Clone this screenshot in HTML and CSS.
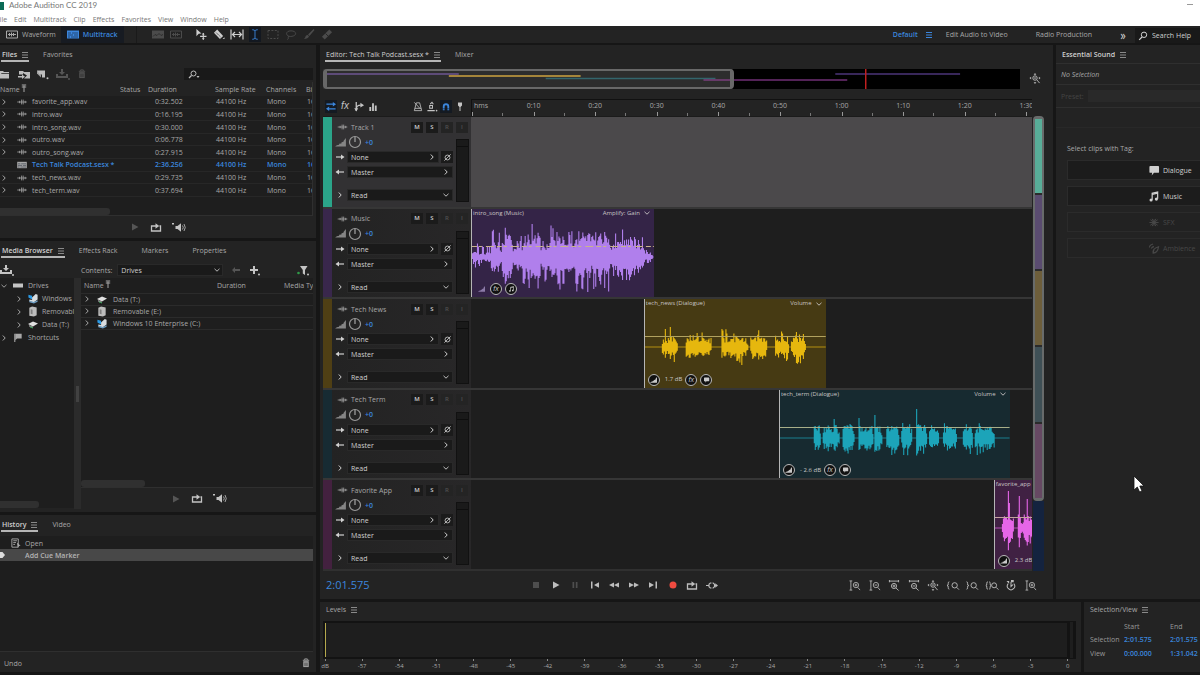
FILE: index.html
```html
<!DOCTYPE html>
<html lang="en">
<head>
<meta charset="utf-8">
<title>Adobe Audition CC 2019</title>
<link rel="stylesheet" href="styles.css">
</head>
<body>
<svg class="sprite" aria-hidden="true">
  <symbol id="wave" viewBox="0 0 12 10"><path d="M0 5h12" stroke="currentColor" stroke-width=".9"/><path d="M3 3.500v3M5.500 2v6M7.500 2v6M10 3.500v3" stroke="currentColor" fill="none"/></symbol>
  <symbol id="waveform" viewBox="0 0 12 10"><path d="M.5 1.500h11v7H.5zM2 5h8M3.500 3.500v3M5.500 3v4M7.500 3.500v3" stroke="currentColor" fill="none"/></symbol>
  <symbol id="multi" viewBox="0 0 12 10"><path d="M0 1h12v8H0z" fill="currentColor"/><path d="M1 3.500h3M5 3.500h6M1 5.500h5M7 5.500h4M1 7.500h2M4 7.500h7" stroke="#111c2c" stroke-width=".6"/></symbol>
  <symbol id="menu" viewBox="0 0 6 8"><path d="M0 1.500h6M0 4h6M0 6.500h6" stroke="currentColor" stroke-width="1"/></symbol>
  <symbol id="hist" viewBox="0 0 12 10"><path d="M0 1h12v8H0z" fill="currentColor"/><path d="M1 7l2-2 2 1 2-2 2 2 2-1" stroke="#232323" stroke-width=".7" fill="none"/></symbol>
  <symbol id="move" viewBox="0 0 12 12"><path d="M1 0l5.500 5-3 .2L1 8z" fill="currentColor"/><path d="M8.500 4.500v7M5 8h7" stroke="currentColor" stroke-width="1.200"/><path d="M7 6l1.500-2L10 6zM7 10l1.500 2 1.500-2z" fill="currentColor"/></symbol>
  <symbol id="razor" viewBox="0 0 12 12"><path d="M4 .5l6.500 7-3.500 3.500L.5 4z" fill="currentColor"/><path d="M3 4l4.500 4.500" stroke="#222" stroke-width="1" stroke-dasharray="1.500 1"/><path d="M10 11h2v-2z" fill="currentColor"/></symbol>
  <symbol id="slip" viewBox="0 0 14 10"><path d="M1 0v10M13 0v10M3 5h8M5 2.500L2.500 5 5 7.500M9 2.500L11.500 5 9 7.500" stroke="currentColor" stroke-width="1.200" fill="none"/></symbol>
  <symbol id="ibeam" viewBox="0 0 8 12"><path d="M1 .8q2.500 0 3 1.200Q4.500.8 7 .8M4 2v8M1 11.200q2.500 0 3-1.200.5 1.200 3 1.200" stroke="currentColor" fill="none"/></symbol>
  <symbol id="marquee" viewBox="0 0 12 10"><path d="M1 1h10v8H1z" stroke="currentColor" stroke-dasharray="2 1.400" fill="none"/></symbol>
  <symbol id="lasso" viewBox="0 0 12 12"><path d="M4 8C0 7 0 2 6 2s7 5 1 6q-2 .3-3 0q-1.500 0-1 1.500t-1 2" stroke="currentColor" fill="none"/></symbol>
  <symbol id="brush" viewBox="0 0 12 12"><path d="M11 0L5 6l1.500 1.500L12 1zM4.500 6.500L6 8q-1 3-5.500 3Q2 9.500 2.200 8.200T4.500 6.500z" fill="currentColor"/></symbol>
  <symbol id="heal" viewBox="0 0 12 12"><path d="M8.500.5l3 3-8 8-3-3z" fill="currentColor"/><path d="M4.500 5l3 3M1 2l3-1.500" stroke="#222"/></symbol>
  <symbol id="mag" viewBox="0 0 10 10"><circle cx="6" cy="3.800" r="2.700" stroke="currentColor" fill="none"/><path d="M4 6L1.200 8.800" stroke="currentColor" stroke-width="1.200"/></symbol>
  <symbol id="magdrop" viewBox="0 0 12 10"><circle cx="5.500" cy="4" r="2.500" stroke="currentColor" fill="none"/><path d="M3.500 6L1 8.500" stroke="currentColor" stroke-width="1.200"/><path d="M8.500 6.500h3L10 8.500z" fill="currentColor"/></symbol>
  <symbol id="folder" viewBox="0 0 12 10"><path d="M0 1.500h4l1 1h5v1.200H2.500L0 8z" fill="currentColor"/><path d="M0 4.500h10V9H0z" fill="currentColor"/></symbol>
  <symbol id="import" viewBox="0 0 12 10"><path d="M1 1.500h4l1 1h6V9H6L9 6 5 3.500v1.500H1z" fill="currentColor"/><path d="M0 6.500h4V5l3 2.300L4 9.500V8H0z" fill="currentColor"/></symbol>
  <symbol id="newf" viewBox="0 0 12 10"><path d="M0 1h8v7H5V5H2.500z" fill="currentColor"/><path d="M0 1v3l4 4V5z" fill="currentColor" opacity=".8"/><circle cx="10.500" cy="8.800" r="1" fill="currentColor"/></symbol>
  <symbol id="download" viewBox="0 0 14 11"><path d="M5 0h2v3h2L6 6 3 3h2zM0 5h2v2h8V5h2v4H0z" fill="currentColor"/><circle cx="13" cy="10" r="1" fill="currentColor"/></symbol>
  <symbol id="trash" viewBox="0 0 10 11"><path d="M1.500 2.500h7M3.500 2V1h3v1" stroke="currentColor" fill="none"/><path d="M2 3.500h6V10H2z" fill="currentColor"/><path d="M3.700 5v4M5 5v4M6.300 5v4" stroke="#222" stroke-width=".6"/></symbol>
  <symbol id="up" viewBox="0 0 6 8"><path d="M3 8V1.500M.8 3h4.400M.8 1h4.400" stroke="currentColor" fill="none"/></symbol>
  <symbol id="right" viewBox="0 0 6 8"><path d="M1.800 1.500L4.200 4 1.800 6.500" stroke="currentColor" fill="none" stroke-width="1"/></symbol>
  <symbol id="down" viewBox="0 0 8 6"><path d="M1.500 1.800L4 4.200l2.500-2.400" stroke="currentColor" fill="none" stroke-width=".9"/></symbol>
  <symbol id="play" viewBox="0 0 10 10"><path d="M2 1.500l6.500 3.500L2 8.500z" fill="currentColor"/></symbol>
  <symbol id="stop" viewBox="0 0 10 10"><path d="M2 2h6v6H2z" fill="currentColor"/></symbol>
  <symbol id="pause" viewBox="0 0 10 10"><path d="M2.500 2h1.700v6H2.500zM5.800 2h1.700v6H5.800z" fill="currentColor"/></symbol>
  <symbol id="first" viewBox="0 0 10 10"><path d="M1 1.500h1.500v7H1zM9 2.200v5.600L4 5z" fill="currentColor"/></symbol>
  <symbol id="last" viewBox="0 0 10 10"><path d="M7.500 1.500H9v7H7.500zM1 2.200v5.600L6 5z" fill="currentColor"/></symbol>
  <symbol id="rew" viewBox="0 0 10 10"><path d="M5 2.500v5L0 5zM10 2.500v5L5 5z" fill="currentColor"/></symbol>
  <symbol id="ffw" viewBox="0 0 10 10"><path d="M5 2.500v5L10 5zM0 2.500v5L5 5z" fill="currentColor"/></symbol>
  <symbol id="rec" viewBox="0 0 10 10"><circle cx="5" cy="5" r="3.500" fill="#f04b40"/></symbol>
  <symbol id="loop" viewBox="0 0 12 10"><path d="M3 3.500H1.500v5h9v-5H9.500M3 3.500h4" stroke="currentColor" stroke-width="1.300" fill="none"/><path d="M5.500.8l3.700 2.700-3.700 2.700z" fill="currentColor"/></symbol>
  <symbol id="skip" viewBox="0 0 12 10"><path d="M0 5h2.500M8 5h2M5.500 2.500h-1.200L3 3.800v2.400l1.300 1.300h1.200M6.500 2.500h.7L8.500 3.800v2.400L7.200 7.500h-.7" stroke="currentColor" stroke-width="1.100" fill="none"/><path d="M9.200 2.800L12 5 9.200 7.200z" fill="currentColor"/></symbol>
  <symbol id="speaker" viewBox="0 0 14 10"><path d="M3.500 3.500h2L9 .8v8.400L5.500 6.500h-2zM0 .5h2v1.500H0z" fill="currentColor"/><path d="M10.500 3q1.500 2 0 4M12 1.500q2.500 3.500 0 7" stroke="currentColor" fill="none" stroke-width=".8"/></symbol>
  <symbol id="back" viewBox="0 0 10 8"><path d="M4 1v2h5v2H4v2L1 4z" fill="currentColor"/></symbol>
  <symbol id="plus" viewBox="0 0 12 11"><path d="M5 1v8M1 5h8" stroke="currentColor" stroke-width="2"/><circle cx="10" cy="9.500" r="1" fill="currentColor"/></symbol>
  <symbol id="filter" viewBox="0 0 12 11"><path d="M3 1h7.500L8 5v5L5.800 8.500V5z" fill="currentColor"/><circle cx="1.500" cy="8" r="1.300" fill="#2f9b48"/><circle cx="11" cy="9.500" r="1" fill="currentColor"/></symbol>
  <symbol id="drive" viewBox="0 0 12 10"><path d="M1 3h10v4H1z" fill="#c4c4c4"/></symbol>
  <symbol id="win" viewBox="0 0 12 12"><path d="M1 2l4 1v4L1 5z" fill="#2b9be6"/><path d="M5 5l4-4 2 1v5L7 10 2 9V7l3 .5z" fill="#d8dde0"/><path d="M2 8.500l5 1.300 4-2v1.700l-4 2-5-1.500z" fill="#6f9fc4"/></symbol>
  <symbol id="remov" viewBox="0 0 12 12"><path d="M2 2l3-1.500 5 1v8.500l-3 1.500-5-1z" fill="#bcbcbc"/><path d="M3.500 3.500l2 .5v5l-2-.6z" fill="#7e7e7e"/></symbol>
  <symbol id="data" viewBox="0 0 12 10"><path d="M1 4.500l5-2.500 5 2L6 7z" fill="#e0e0e0"/><path d="M2 5.500l4 1.500v1.500L2 7z" fill="#8d8d8d"/><path d="M3 7l3 1v1L3 8z" fill="#3aa15a"/></symbol>
  <symbol id="flag" viewBox="0 0 12 12"><path d="M2.500 2v9" stroke="currentColor" stroke-width="1.200"/><path d="M3 2h7v5H5L3 9z" fill="currentColor"/></symbol>
  <symbol id="doc" viewBox="0 0 12 12"><path d="M1.500 1h7v9h-7zM3 3h4M3 5h3M3 7h2" stroke="currentColor" fill="none"/><path d="M7 5l4 3.500-2 .3L8 11z" fill="currentColor"/></symbol>
  <symbol id="cue" viewBox="0 0 6 6"><path d="M0 0h2.500l2.500 3-2.500 3H0z" fill="currentColor"/></symbol>
  <symbol id="inout" viewBox="0 0 12 12"><path d="M1 3.500h8M3 8.500h8" stroke="currentColor" stroke-width="1.300"/><path d="M8 1l3.500 2.500L8 6zM4 6L.5 8.500 4 11z" fill="currentColor"/></symbol>
  <symbol id="sends" viewBox="0 0 12 12"><path d="M3 1v10M3 9q0-4.500 5-4.500" stroke="currentColor" stroke-width="1.400" fill="none"/><path d="M7.500 2l4 2.500-4 2.500zM.8 8h4.400L3 11.500z" fill="currentColor"/></symbol>
  <symbol id="bars" viewBox="0 0 12 12"><path d="M2 6.500h2V11H2zM5 2.500h2V11H5zM8 5h2v6H8z" fill="currentColor"/></symbol>
  <symbol id="metro" viewBox="0 0 12 12"><path d="M4.200 2h3.600L10 10.500H2zM2.500 8h7M2 1.500l6 6.500" stroke="currentColor" fill="none" stroke-width=".9"/></symbol>
  <symbol id="pulse" viewBox="0 0 12 12"><path d="M1 10.500h8M3.500 8V5h3v3zM4 3.500l2-2 1.500 2" stroke="currentColor" fill="none" stroke-width="1.100"/><circle cx="11" cy="10.500" r=".9" fill="currentColor"/></symbol>
  <symbol id="magnet" viewBox="0 0 12 12"><path d="M3.500 10V6a2.500 2.500 0 0 1 5 0v4" stroke="currentColor" stroke-width="2" fill="none"/><path d="M2 8.500h8" stroke="#10151d" stroke-width=".6"/></symbol>
  <symbol id="pin" viewBox="0 0 12 12"><path d="M3.800 1.500h4.400V5L6.500 6.500h-1L3.800 5z" fill="currentColor"/><path d="M6 6v5" stroke="currentColor" stroke-width="1.100"/></symbol>
  <symbol id="ramp" viewBox="0 0 12 10"><path d="M0 9.500h12V0L9.500 3v1L7 5v1L4.500 6.500v1L2 8z" fill="currentColor"/></symbol>
  <symbol id="knob" viewBox="0 0 14 14"><circle cx="7" cy="7" r="5.500" stroke="currentColor" fill="none" stroke-width="1.200"/><path d="M7 2v5" stroke="currentColor" stroke-width="1.300"/></symbol>
  <symbol id="arr" viewBox="0 0 10 8"><path d="M1 4h6" stroke="currentColor" stroke-width="1.200"/><path d="M6 1.500L9.500 4 6 6.500z" fill="currentColor"/></symbol>
  <symbol id="arl" viewBox="0 0 10 8"><path d="M3 4h6" stroke="currentColor" stroke-width="1.200"/><path d="M4 1.500L.5 4 4 6.500z" fill="currentColor"/></symbol>
  <symbol id="phase" viewBox="0 0 10 10"><circle cx="5" cy="5" r="2.700" stroke="currentColor" fill="none" stroke-width=".9"/><path d="M1.500 8.500l7-7" stroke="currentColor" stroke-width=".9"/></symbol>
  <symbol id="bubble" viewBox="0 0 12 12"><path d="M2 1h8.500q1 0 1 1v5.500q0 1-1 1H6L3.500 11.500 4 8.500H2q-1 0-1-1V2q0-1 1-1z" fill="currentColor"/></symbol>
  <symbol id="note" viewBox="0 0 12 12"><path d="M4 9.500V2.500L10 1v7.500M4 3.800l6-1.500" stroke="currentColor" stroke-width="1.300" fill="none"/><circle cx="2.800" cy="9.800" r="1.700" fill="currentColor"/><circle cx="8.600" cy="8.800" r="1.700" fill="currentColor"/></symbol>
  <symbol id="burst" viewBox="0 0 12 12"><path d="M6 2.500v7M1 6h10M2 3l8 6M2 9l8-6M4 2l4 8M8 2L4 10" stroke="currentColor"/></symbol>
  <symbol id="amb" viewBox="0 0 12 12"><path d="M1 5q0-3 4-4M3 6q1-2 3-2M5 11q-1-5 6-7-1 7-6 7zM6 7l-1 4" stroke="currentColor" fill="none" stroke-width="1.200"/></symbol>
  <symbol id="zoomnav" viewBox="0 0 12 12"><circle cx="6" cy="5.500" r="2.400" stroke="currentColor" fill="none"/><path d="M8 7.500l3 3.500M4.800 5.500h2.400" stroke="currentColor"/><path d="M6 0l1.500 1.800h-3zM6 12l1.500-1.800h-3zM0 5.500L1.800 4v3zM12 5.500L10.200 4v3z" fill="currentColor"/></symbol>
  <symbol id="zv-in" viewBox="0 0 12 12"><path d="M1.500 1v10M0 1h3M0 11h3M9 8l2.500 3M5.500 5.500h3M7 4v3" stroke="currentColor" fill="none" stroke-width=".9"/><circle cx="7" cy="5.500" r="2.900" stroke="currentColor" fill="none" stroke-width=".9"/></symbol>
  <symbol id="zv-out" viewBox="0 0 12 12"><path d="M1.500 1v10M0 1h3M0 11h3M9 8l2.500 3M5.500 5.500h3" stroke="currentColor" fill="none" stroke-width=".9"/><circle cx="7" cy="5.500" r="2.900" stroke="currentColor" fill="none" stroke-width=".9"/></symbol>
  <symbol id="zh-in" viewBox="0 0 12 12"><path d="M1 1.200h10M1 0v2.500M11 0v2.500M8 8.500l3 3M4.500 6.500h3M6 5v3" stroke="currentColor" fill="none"/><circle cx="6" cy="6.500" r="2.800" stroke="currentColor" fill="none"/></symbol>
  <symbol id="zh-out" viewBox="0 0 12 12"><path d="M1 1.200h10M1 0v2.500M11 0v2.500M8 8.500l3 3M4.500 6.500h3" stroke="currentColor" fill="none"/><circle cx="6" cy="6.500" r="2.800" stroke="currentColor" fill="none"/></symbol>
  <symbol id="z-l" viewBox="0 0 14 12"><path d="M3 2Q1.500 2 1.800 4T.5 6q1.600 0 1.300 2T3 10M11 8l2.500 2.500" stroke="currentColor" fill="none"/><circle cx="8.800" cy="5.800" r="2.900" stroke="currentColor" fill="none"/></symbol>
  <symbol id="z-r" viewBox="0 0 14 12"><path d="M1 2q1.500 0 1.200 2T3.500 6q-1.600 0-1.300 2T1 10M11 8l2.500 2.500" stroke="currentColor" fill="none"/><circle cx="8.800" cy="5.800" r="2.900" stroke="currentColor" fill="none"/></symbol>
  <symbol id="z-lr" viewBox="0 0 14 12"><path d="M2.500 2Q1 2 1.300 4T.3 6q1.300 0 1 2t1.200 2M4 2q1.200 0 1 2t1 2q-1.200 0-1 2t-1 2M11.500 8l2.500 2.500" stroke="currentColor" fill="none"/><circle cx="9.300" cy="5.800" r="2.700" stroke="currentColor" fill="none"/></symbol>
  <symbol id="timer" viewBox="0 0 12 12"><path d="M3 4a4 4 0 1 0 6 0M6 2v5l2-2" stroke="currentColor" fill="none" stroke-width="1.100"/><path d="M1 1h3v3zM6 0h3v2.500H6z" fill="currentColor"/></symbol>
</svg>

<header class="titlebar">
  <div class="title"><span class="applogo"></span><span>Adobe Audition CC 2019</span><span class="minimize"></span></div>
  <nav class="menubar">
    <button>File</button><button>Edit</button><button>Multitrack</button><button>Clip</button><button>Effects</button><button>Favorites</button><button>View</button><button>Window</button><button>Help</button>
  </nav>
</header>

<div class="toolbar">
  <button class="mode"><svg class="w12"><use href="#waveform"/></svg>Waveform</button>
  <button class="mode on"><svg class="w12"><use href="#multi"/></svg>Multitrack</button>
  <div class="tools">
    <button class="dim" aria-label="Spectral frequency"><svg class="w12"><use href="#hist"/></svg></button>
    <button class="dim" aria-label="Spectral pitch"><svg class="w12"><use href="#waveform"/></svg></button>
    <span></span>
    <button aria-label="Move"><svg class="w12"><use href="#move"/></svg></button>
    <button aria-label="Razor"><svg class="w12"><use href="#razor"/></svg></button>
    <button aria-label="Slip"><svg class="w14"><use href="#slip"/></svg></button>
    <button class="sel" aria-label="Time selection"><svg class="w12"><use href="#ibeam"/></svg></button>
    <button class="dim" aria-label="Marquee"><svg class="w12"><use href="#marquee"/></svg></button>
    <button class="dim" aria-label="Lasso"><svg class="w12"><use href="#lasso"/></svg></button>
    <button class="dim" aria-label="Brush"><svg class="w12"><use href="#brush"/></svg></button>
    <button class="dim" aria-label="Heal"><svg class="w12"><use href="#heal"/></svg></button>
  </div>
  <div class="workspaces">
    <button class="on">Default <svg class="w6"><use href="#menu"/></svg></button>
    <button>Edit Audio to Video</button>
    <button>Radio Production</button>
    <button class="more" aria-label="More workspaces">»</button>
  </div>
  <label class="help"><svg class="w10"><use href="#mag"/></svg><input type="text" value="Search Help" aria-label="Search Help"></label>
</div>

<main class="work">
  <aside class="left">
    <section class="panel files">
      <div class="tabs"><button class="tab on">Files <svg class="w6"><use href="#menu"/></svg></button><button class="tab">Favorites</button></div>
      <div class="filebar">
        <button aria-label="Open"><svg class="w12"><use href="#folder"/></svg></button>
        <button aria-label="Import"><svg class="w12"><use href="#import"/></svg></button>
        <button aria-label="New"><svg class="w12"><use href="#newf"/></svg></button>
        <button class="dim" aria-label="Insert"><svg class="w14"><use href="#download"/></svg></button>
        <button class="dim" aria-label="Delete"><svg class="w10"><use href="#trash"/></svg></button>
        <label class="search"><svg class="w12"><use href="#magdrop"/></svg><input type="text" aria-label="Search files"></label>
      </div>
      <div class="tablewrap">
        <table class="filetable">
          <colgroup><col class="c-name"><col class="c-status"><col class="c-dur"><col class="c-rate"><col class="c-ch"><col class="c-bit"></colgroup>
          <thead><tr><th>Name <svg class="w6"><use href="#up"/></svg></th><th>Status</th><th>Duration</th><th>Sample Rate</th><th>Channels</th><th>Bit</th></tr></thead>
          <tbody id="files"></tbody>
        </table>
        <div class="hscroll"></div>
      </div>
      <div class="preview">
        <button class="dim" aria-label="Play"><svg class="w10"><use href="#play"/></svg></button>
        <button aria-label="Loop"><svg class="w12"><use href="#loop"/></svg></button>
        <button aria-label="Auto-play"><svg class="w14"><use href="#speaker"/></svg></button>
      </div>
    </section>

    <section class="panel media">
      <div class="tabs wide"><button class="tab on">Media Browser <svg class="w6"><use href="#menu"/></svg></button><button class="tab">Effects Rack</button><button class="tab">Markers</button><button class="tab">Properties</button></div>
      <div class="mediabar">
        <button aria-label="Import"><svg class="w14"><use href="#download"/></svg></button>
        <label for="contents">Contents:</label>
        <span class="pick"><select id="contents"><option>Drives</option></select><svg class="w8"><use href="#down"/></svg></span>
        <button class="dim" aria-label="Back"><svg class="w10"><use href="#back"/></svg></button>
        <button aria-label="Add shortcut"><svg class="w12"><use href="#plus"/></svg></button>
        <button class="filter" aria-label="Filter"><svg class="w12"><use href="#filter"/></svg></button>
      </div>
      <div class="browser">
        <div class="treepane">
          <ul class="tree">
            <li><svg class="w8"><use href="#down"/></svg><svg class="w12"><use href="#drive"/></svg>Drives</li>
            <li class="sub"><svg class="w8"><use href="#right"/></svg><svg class="w12"><use href="#win"/></svg>Windows 10</li>
            <li class="sub"><svg class="w8"><use href="#right"/></svg><svg class="w12"><use href="#remov"/></svg>Removable</li>
            <li class="sub"><svg class="w8"><use href="#right"/></svg><svg class="w12"><use href="#data"/></svg>Data (T:)</li>
            <li><svg class="w8"><use href="#right"/></svg><svg class="w12"><use href="#flag"/></svg>Shortcuts</li>
          </ul>
          <div class="hscroll"></div>
        </div>
        <div class="splitter"></div>
        <div class="listpane">
          <table class="medialist">
            <colgroup><col class="m-name"><col class="m-dur"><col class="m-type"></colgroup>
            <thead><tr><th>Name <svg class="w6"><use href="#up"/></svg></th><th>Duration</th><th>Media Type</th></tr></thead>
            <tbody>
              <tr><td colspan="3"><span class="cell"><svg class="w8"><use href="#right"/></svg><svg class="w12"><use href="#data"/></svg>Data (T:)</span></td></tr>
              <tr><td colspan="3"><span class="cell"><svg class="w8"><use href="#right"/></svg><svg class="w12"><use href="#remov"/></svg>Removable (E:)</span></td></tr>
              <tr><td colspan="3"><span class="cell"><svg class="w8"><use href="#right"/></svg><svg class="w12"><use href="#win"/></svg>Windows 10 Enterprise (C:)</span></td></tr>
            </tbody>
          </table>
          <div class="hscroll"></div>
          <div class="preview">
            <button class="dim" aria-label="Play"><svg class="w10"><use href="#play"/></svg></button>
            <button aria-label="Loop"><svg class="w12"><use href="#loop"/></svg></button>
            <button aria-label="Auto-play"><svg class="w14"><use href="#speaker"/></svg></button>
          </div>
        </div>
      </div>
    </section>

    <section class="panel history">
      <div class="tabs"><button class="tab on">History <svg class="w6"><use href="#menu"/></svg></button><button class="tab">Video</button></div>
      <ul class="steps">
        <li><svg class="w12"><use href="#doc"/></svg>Open</li>
        <li class="on"><svg class="w6"><use href="#cue"/></svg>Add Cue Marker</li>
      </ul>
      <div class="histfoot"><button>Undo</button><button aria-label="Delete history"><svg class="w10"><use href="#trash"/></svg></button></div>
    </section>
  </aside>

  <div class="stage">
    <div class="upper">
      <section class="panel editor">
        <div class="tabs"><button class="tab on">Editor: Tech Talk Podcast.sesx * <svg class="w6"><use href="#menu"/></svg></button><button class="tab">Mixer</button></div>
        <div class="navrow">
          <div class="overview">
            <svg viewBox="0 0 698 20" preserveAspectRatio="none">
              <path d="M0 0h698v20H0z" fill="#000"/><path d="M0 0h410v20H0z" fill="#2d2d2d"/>
              <path d="M4 5h132" stroke="#5d4b78" stroke-width="2"/><path d="M126 7h132" stroke="#a5853a" stroke-width="2"/>
              <path d="M223 9.500h170" stroke="#33656c" stroke-width="1.500"/><path d="M381 11h29" stroke="#7a3f7c" stroke-width="1.500"/>
              <path d="M410 11h115" stroke="#6f2f75" stroke-width="1.500"/><path d="M513 5h125" stroke="#4b3478" stroke-width="1.500"/>
              <path d="M543.500 0v20" stroke="#c01f1f" stroke-width="1.500"/>
            </svg>
            <div class="window"></div>
          </div>
          <button aria-label="Zoom out full"><svg class="w12"><use href="#zoomnav"/></svg></button>
        </div>
        <div class="multitrack">
          <div class="tracks">
            <div class="rulerrow">
              <div class="viewbtns">
                <button class="blue" aria-label="Inputs/Outputs"><svg class="w12"><use href="#inout"/></svg></button>
                <button class="fx" aria-label="Effects">fx</button>
                <button aria-label="Sends"><svg class="w12"><use href="#sends"/></svg></button>
                <button aria-label="EQ"><svg class="w12"><use href="#bars"/></svg></button>
                <span></span>
                <button aria-label="Metronome"><svg class="w12"><use href="#metro"/></svg></button>
                <button aria-label="Global stretch"><svg class="w12"><use href="#pulse"/></svg></button>
                <button class="blue" aria-label="Snap"><svg class="w12"><use href="#magnet"/></svg></button>
                <button aria-label="Marker"><svg class="w12"><use href="#pin"/></svg></button>
              </div>
              <div class="ruler" id="ruler"></div>
            </div>
            <div class="rows" id="tracks"></div>
          </div>
          <div class="vmap">
            <div class="vwindow"><i class="t-teal"></i><i class="t-purple"></i><i class="t-olive"></i><i class="t-slate"></i><i class="t-mauve"></i></div>
            <div class="vrest"></div>
          </div>
        </div>
        <div class="transport">
          <output class="time">2:01.575</output>
          <div class="playbar">
            <button class="dim" aria-label="Stop"><svg class="w10"><use href="#stop"/></svg></button>
            <button aria-label="Play"><svg class="w10"><use href="#play"/></svg></button>
            <button class="dim" aria-label="Pause"><svg class="w10"><use href="#pause"/></svg></button>
            <button aria-label="To start"><svg class="w10"><use href="#first"/></svg></button>
            <button aria-label="Rewind"><svg class="w10"><use href="#rew"/></svg></button>
            <button aria-label="Fast forward"><svg class="w10"><use href="#ffw"/></svg></button>
            <button aria-label="To end"><svg class="w10"><use href="#last"/></svg></button>
            <button aria-label="Record"><svg class="w10"><use href="#rec"/></svg></button>
            <button aria-label="Loop"><svg class="w12"><use href="#loop"/></svg></button>
            <button aria-label="Skip selection"><svg class="w12"><use href="#skip"/></svg></button>
          </div>
          <div class="zoombar">
            <button aria-label="Zoom in vertically"><svg class="w12"><use href="#zv-in"/></svg></button>
            <button aria-label="Zoom out vertically"><svg class="w12"><use href="#zv-out"/></svg></button>
            <button aria-label="Zoom in"><svg class="w12"><use href="#zh-in"/></svg></button>
            <button aria-label="Zoom out"><svg class="w12"><use href="#zh-out"/></svg></button>
            <button aria-label="Zoom full"><svg class="w12"><use href="#zoomnav"/></svg></button>
            <button aria-label="Zoom to in point"><svg class="w14"><use href="#z-l"/></svg></button>
            <button aria-label="Zoom to out point"><svg class="w14"><use href="#z-r"/></svg></button>
            <button aria-label="Zoom to selection"><svg class="w14"><use href="#z-lr"/></svg></button>
            <button aria-label="Zoom to time"><svg class="w12"><use href="#timer"/></svg></button>
            <button aria-label="Zoom tracks"><svg class="w12"><use href="#zv-in"/></svg></button>
          </div>
        </div>
      </section>

      <section class="panel sound">
        <div class="tabs"><button class="tab on">Essential Sound <svg class="w6"><use href="#menu"/></svg></button></div>
        <p class="nosel">No Selection</p>
        <div class="preset"><label for="preset">Preset:</label><select id="preset" disabled></select></div>
        <div class="tags">
          <p>Select clips with Tag:</p>
          <button><svg class="w12"><use href="#bubble"/></svg>Dialogue</button>
          <button><svg class="w12"><use href="#note"/></svg>Music</button>
          <button disabled><svg class="w12"><use href="#burst"/></svg>SFX</button>
          <button disabled><svg class="w12"><use href="#amb"/></svg>Ambience</button>
        </div>
      </section>
    </div>

    <div class="lower">
      <section class="panel levels">
        <div class="tabs"><button class="tab">Levels <svg class="w6"><use href="#menu"/></svg></button></div>
        <div class="meterbox"><i></i></div>
        <div class="scale" id="scale"></div>
      </section>
      <section class="panel selview">
        <div class="tabs"><button class="tab">Selection/View <svg class="w6"><use href="#menu"/></svg></button></div>
        <table>
          <thead><tr><td></td><th>Start</th><th>End</th></tr></thead>
          <tbody>
            <tr><th>Selection</th><td>2:01.575</td><td>2:01.575</td></tr>
            <tr><th>View</th><td>0:00.000</td><td>1:31.042</td></tr>
          </tbody>
        </table>
      </section>
    </div>
  </div>
</main>
<svg class="cursor" viewBox="0 0 12 18"><path d="M1 1v14l3.300-3 2.300 5 2.400-1-2.200-5H11z" fill="#fff" stroke="#111" stroke-width=".8"/></svg>
<script src="app.js"></script>
</body>
</html>
```

FILE: styles.css
```css
* { box-sizing: border-box; }

:root {
  --panel: #232323;
  --well: #1e1e1e;
  --gutter: #161616;
  --line: #2f2f2f;
  --text: #a8a8a8;
  --bright: #d0d0d0;
  --blue: #3b86dd;
}

body {
  margin: 0;
  min-height: 100vh;
  display: flex;
  flex-direction: column;
  background: var(--gutter);
  color: var(--text);
  font: 7px/11px "Open Sans", "Noto Sans", sans-serif;
  overflow: hidden;
}

button, input, select {
  margin: 0;
  padding: 0;
  border: 0;
  background: none;
  color: inherit;
  font: inherit;
  outline: 0;
}
button { display: inline-flex; align-items: center; justify-content: center; white-space: nowrap; }
select { appearance: none; opacity: 1; }
table { border-collapse: collapse; table-layout: fixed; }
th { font-weight: 400; text-align: left; }
th, td { padding: 0; white-space: nowrap; overflow: hidden; }
ul { list-style: none; margin: 0; padding: 0; }
p { margin: 0; }

svg { display: block; flex: none; overflow: visible; }
.sprite { position: absolute; width: 0; height: 0; }
.w6 { width: 6px; height: 8px; display: inline-block; }
.w8 { width: 8px; height: 8px; }
.w10 { width: 10px; height: 10px; }
.w12 { width: 12px; height: 11px; }
.w14 { width: 14px; height: 11px; }
.dim { color: #555; }

/* Title and menus */
.titlebar { background: #fff; color: #777; height: 26px; }
.title { display: flex; align-items: center; gap: 5px; height: 11px; font-size: 8px; font-family: Lato, "Open Sans", sans-serif; }
.applogo { width: 4px; height: 8px; background: #0b6b56; }
.minimize { width: 6px; height: 1px; margin: 0 7px 3px auto; background: #999; }
.menubar { display: flex; gap: 7px; height: 15px; padding-top: 2px; margin-left: -4px; }

/* Toolbar */
.toolbar { display: flex; align-items: stretch; height: 17px; background: var(--panel); margin-bottom: 2px; }
.mode { gap: 4px; padding: 0 6px; }
.mode.on { background: #171b22; color: var(--blue); font-weight: 600; margin-left: -1px; }
.tools { display: flex; align-items: center; gap: 6px; margin-left: 12px; padding-left: 15px; border-left: 1px solid #1a1a1a; color: #cfcfcf; }
.tools button { width: 12px; height: 15px; }
.tools .dim { color: #4b4b4b; }
.tools .sel { background: #131820; color: var(--blue); }
.tools > span { width: 1px; }
.workspaces { display: flex; align-items: center; gap: 28px; margin-left: auto; padding-right: 9px; }
.workspaces button:nth-child(2) { margin-left: -14px; }
.workspaces .on { color: var(--blue); gap: 8px; font-weight: 600; }
.workspaces .more { font: 14px/14px Lato, sans-serif; color: var(--bright); }
.help { display: flex; align-items: center; gap: 4px; width: 65px; margin-top: 2px; padding-left: 3px; background: #191919; color: var(--bright); }
.help input { width: 46px; }

/* Frame */
.work { flex: 1; display: grid; grid-template-columns: 316px minmax(0, 1fr); gap: 4px; min-height: 0; padding-bottom: 3px; }
.left { display: flex; flex-direction: column; gap: 3px; min-width: 0; }
.stage { display: flex; flex-direction: column; gap: 3px; min-width: 0; }
.upper { flex: 1; display: grid; grid-template-columns: minmax(0, 1fr) 144px; gap: 3px; }
.lower { display: grid; grid-template-columns: minmax(0, 1fr) 116px; gap: 3px; height: 70px; }
.panel { background: var(--panel); min-width: 0; overflow: hidden; display: flex; flex-direction: column; }
.tabs { display: flex; align-items: flex-start; gap: 14px; height: 21px; padding: 2px 1px 0; flex: none; }
.tab { height: 15px; gap: 5px; }
.tab.on { color: var(--bright); font-weight: 600; border-bottom: 2px solid #b5b5b5; padding: 2px 1px 0; }
.tab svg { color: #8a8a8a; }
.tabs.wide .tab + .tab + .tab { margin-left: 10px; }

.hscroll { height: 7px; width: 110px; background: #303030; border-radius: 0 3px 3px 0; }
.preview { display: flex; align-items: center; gap: 10px; color: #c4c4c4; }

/* Files */
.files { height: 193px; padding-right: 3px; }
.filebar { display: flex; align-items: center; gap: 7px; height: 16px; color: #bdbdbd; }
.filebar button:first-child { margin-left: -1px; }
.search { display: flex; align-items: center; width: 129px; height: 12px; margin-left: auto; padding-left: 4px; background: #191919; }
.search input { width: 100px; }
.tablewrap { flex: 1; background: var(--well); border: solid var(--line); border-width: 0 1px 1px 0; overflow: hidden; display: flex; flex-direction: column; }
.tablewrap .hscroll { margin-top: auto; }
.filetable { width: 340px; height: 115px; }
.filetable th { height: 14px; background: var(--panel); }
.filetable td { border-bottom: 1px solid #272727; }
.filetable td:nth-child(2) { padding-left: 7px; }
.filetable td:nth-child(3), .filetable td:nth-child(4), .filetable td:nth-child(5) { padding-left: 1px; }
.filetable .on { color: var(--blue); font-weight: 600; }
.c-name { width: 120px; } .c-status { width: 28px; } .c-dur { width: 67px; } .c-rate { width: 51px; } .c-ch { width: 40px; } .c-bit { width: 34px; }
.cell { display: flex; align-items: center; gap: 4px; }
.filetable .cell .w8 { margin-right: 5px; }
.filetable .cell .w12 { width: 10px; height: 8px; margin-right: 1px; color: #a8a8a8; }
.files .preview { height: 22px; padding-left: 130px; }

/* Media browser */
.media { height: 271px; padding-right: 3px; }
.mediabar { display: flex; align-items: center; height: 16px; color: #c4c4c4; }
.mediabar label { margin: 0 5px 0 67px; color: var(--text); }
.pick { display: grid; align-items: center; background: #1a1a1a; border: 1px solid #292929; height: 12px; }
.pick > * { grid-area: 1 / 1; }
.pick select { width: 100%; padding-left: 3px; color: var(--bright); height: 10px; }
.pick svg { justify-self: end; margin-right: 1px; pointer-events: none; }
.mediabar .pick { width: 106px; margin-right: 8px; }
.mediabar .dim { margin-right: 8px; }
.mediabar .filter { margin: 0 4px 0 auto; }
.browser { flex: 1; display: flex; min-height: 0; }
.treepane { width: 74px; background: var(--well); display: flex; flex-direction: column; overflow: hidden; margin-bottom: 4px; }
.treepane .hscroll { width: 39px; margin-top: auto; }
.tree { display: grid; grid-auto-rows: 13px; padding-top: 1px; }
.tree li { display: flex; align-items: center; gap: 2px; white-space: nowrap; }
.tree li .w12 { margin: 0 2px; }
.tree .sub { padding-left: 15px; }
.tree .sub .w12 { margin-right: 1px; }
.splitter { width: 7px; background: #2b2b2b; margin-bottom: 3px; }
.splitter::after { content: ""; display: block; width: 3px; height: 16px; margin: 108px 2px 0; background: #414141; }
.listpane { flex: 1; background: var(--well); display: flex; flex-direction: column; overflow: hidden; }
.listpane .hscroll { width: 64px; margin-top: auto; border-radius: 3px; }
.listpane .preview { height: 25px; padding: 0 0 3px 90px; background: var(--panel); border-top: 1px solid var(--line); }
.medialist { width: 260px; }
.medialist th { height: 15px; padding-left: 3px; }
.medialist td { height: 12px; border-top: 1px solid #2b2b2b; border-bottom: 1px solid #2b2b2b; }
.medialist .cell { gap: 5px; padding-left: 2px; height: 11px; }
.m-name { width: 133px; } .m-dur { width: 67px; } .m-type { width: 60px; }

/* History */
.history { flex: 1; padding-right: 3px; }
.steps { flex: 1; background: var(--well); border-bottom: 1px solid var(--line); padding-top: 1px; }
.steps li { display: flex; align-items: center; height: 12px; padding-left: 10px; gap: 3px; }
.steps .on { background: #484848; padding-left: 0; gap: 19px; color: #b4b4b4; font-weight: 600; }
.steps .w6 { height: 6px; color: #ddd; }
.histfoot { display: flex; justify-content: space-between; height: 20px; padding: 2px 2px 0 4px; }

/* Editor */
.editor .tabs { padding-left: 5px; }
.editor .tab.on { font-weight: 400; }
.navrow { display: flex; align-items: center; height: 25px; padding: 0 12px 0 3px; gap: 9px; color: #bbb; }
.overview { flex: 1; display: grid; height: 20px; }
.overview > * { grid-area: 1 / 1; width: 100%; height: 20px; }
.overview .window { width: 59%; border: 2px solid #686868; border-left-width: 4px; border-right-width: 4px; border-radius: 4px; }
.multitrack { flex: 1; display: flex; padding: 5px 9px 0 3px; min-height: 0; }
.tracks { flex: 1; display: flex; flex-direction: column; min-width: 0; }
.rulerrow { display: flex; height: 20px; }
.viewbtns { width: 148px; display: flex; align-items: center; gap: 2px; padding: 0 5px 0 2px; color: #c4c4c4; }
.viewbtns button { width: 12px; height: 13px; }
.viewbtns > span { flex: 1; }
.viewbtns .blue { background: #141a22; color: var(--blue); }
.viewbtns .fx { font: italic 10px/12px "Liberation Sans", sans-serif; }
.ruler { flex: 1; display: flex; overflow: hidden; margin-top: 3px; border-top: 1px solid #111; border-left: 1px solid #111; }
.ruler div {
  flex: 0 0 11%;
  display: flex;
  background:
    linear-gradient(#999, #999) 0 100% / 1px 4px no-repeat,
    linear-gradient(#777, #777) 50% 100% / 1px 3px no-repeat;
}
.ruler span { width: 0; display: flex; justify-content: center; white-space: nowrap; }
.ruler div:first-child span { width: auto; padding-left: 2px; }
.rows { flex: 1; display: grid; grid-auto-rows: 1fr; border-bottom: 2px solid #303030; }
.track { display: flex; min-height: 88px; border-top: 2px solid #363636; }
.track:first-child { border-top: 1px solid #1b1b1b; }
.stripe { width: 9px; }
.head { width: 139px; display: flex; gap: 3px; padding: 4px 2px 0 3px; background: linear-gradient(90deg, #232323, #282728); }
.track:first-child .head { background: #323133; }
.controls { width: 118px; display: flex; flex-direction: column; gap: 3px; }
.controls > div { display: flex; align-items: center; height: 12px; }
.controls .top { gap: 2px; margin: 0 -15px 1px 0; }
.top .w12 { width: 11px; height: 8px; margin: 0 1px 0 2px; }
.top b { flex: 1; font-weight: 400; }
.top button { width: 12px; height: 11px; background: #1b1b1b; color: var(--bright); font-size: 6px; font-weight: 600; margin-left: 1px; }
.controls .top .off { background: #242424; color: #505050; }
.controls .vol { height: 14px; margin: -2px 0 -1px; gap: 2px; color: #9b9b9b; }
.vol .w12 { width: 11px; height: 9px; color: #858585; }
.vol .w14 { height: 14px; }
.vol button { color: var(--blue); font-weight: 600; margin-left: 1px; }
.controls .auto { margin-top: 8px; }
.io { gap: 2px; color: #d0d0d0; }
.io > svg { width: 10px; height: 8px; }
.io .pick { flex: 1; }
.io .pick svg { margin-right: 2px; }
.io button { width: 12px; height: 12px; background: #1b1b1b; }
.io button svg { width: 9px; height: 9px; }
.vu { width: 13px; height: 63px; margin: 18px 0 0; background: #1a1a1a; border: 1px solid #111; }
.vu::after { content: ""; display: block; height: 6px; border-bottom: 1px solid #0e0e0e; }
.lane { flex: 1; position: relative; overflow: hidden; background: #1e1e1e; }
.track:first-child .lane { background: #4b494b; }
.clip { position: absolute; top: 0; bottom: 0; border-left: 1px solid #b5b5b5; display: grid; }
.clip > * { grid-area: 1 / 1; min-width: 0; }
.clip > svg { width: 100%; height: 88px; }
.cliphead { display: flex; justify-content: space-between; height: 9px; line-height: 9px; color: #c9c5c5; padding-left: 1px; white-space: nowrap; font-size: 6px; }
.cliphead button { gap: 3px; padding-right: 3px; height: 9px; }
.badges { align-self: end; display: flex; align-items: center; gap: 3px; padding: 0 0 2px 3px; color: #c9c9c9; white-space: nowrap; }
.badges span { flex: none; display: flex; align-items: center; justify-content: center; width: 12px; height: 12px; border: 1px solid #b9b9b9; border-radius: 50%; background: #111; font: italic 7px/10px "Liberation Sans", sans-serif; }
.badges span svg { width: 7px; height: 6px; }
.badges .plain { border: 0; background: none; color: #8c7aa8; }
.badges em { font-style: normal; margin: 0 0 0 2px; font-size: 6px; }
.vmap { width: 11px; margin: 20px 0 0 1px; display: flex; flex-direction: column; }
.vwindow { flex: 383; border: solid #686b6b; border-width: 3px 2px; border-radius: 4px; display: flex; flex-direction: column; gap: 2px; background: #2b2b2b; }
.vwindow i { flex: 1; }
.vrest { flex: 71; background: #14233f; }
.t-teal { background: #58ad98; } .t-purple { background: #5a4c70; } .t-olive { background: #6d5e3b; } .t-slate { background: #3f5056; } .t-mauve { background: #664963; }

.transport { display: flex; align-items: center; height: 28px; padding: 0 15px 0 6px; color: #bdbdbd; }
.time { width: 203px; color: var(--blue); font-size: 11px; line-height: 14px; }
.playbar, .zoombar { display: flex; align-items: center; justify-content: space-between; width: 190px; }
.playbar button, .zoombar button { width: 14px; height: 14px; }
.zoombar { margin-left: auto; }
.transport .dim { color: #4e4e4e; }

/* Essential sound */
.sound .tabs { padding: 1px 5px 0; height: 19px; border-bottom: 1px solid var(--line); }
.sound .tab { border: 0; }
.nosel { height: 21px; line-height: 21px; padding-left: 5px; font-style: italic; border-bottom: 1px solid var(--line); }
.preset { display: flex; align-items: center; height: 23px; padding-left: 5px; gap: 4px; color: #444; border-bottom: 1px solid var(--line); }
.preset select { flex: 1; height: 12px; background: #292929; }
.tags { display: flex; flex-direction: column; gap: 6px; margin-top: 19px; padding: 15px 0 0 11px; border-top: 1px solid #282828; color: var(--bright); }
.tags button { height: 20px; margin-right: -2px; justify-content: flex-start; gap: 3px; padding-left: 80px; background: #1c1c1c; border: 1px solid #2b2b2b; }
.tags p { color: var(--text); }
.tags button:disabled { background: #222; color: #484848; }

/* Levels */
.levels .tabs, .selview .tabs { padding: 0 6px; height: 19px; }
.levels { padding-right: 5px; }
.meterbox { height: 38px; margin: 0 0 0 3px; background: var(--well); border: 2px solid #131313; border-right: 9px double #131313; }
.meterbox i { display: block; width: 1px; height: 34px; background: #b5a94e; }
.scale { display: flex; justify-content: space-between; height: 12px; margin: 0 8px 0 5px; font-size: 6px; }
.scale span { width: 0; height: 12px; display: flex; flex-direction: column; align-items: center; line-height: 11px; }
.scale span::before { content: ""; width: 1px; height: 2px; flex: none; background: #888; }
.selview .tabs { height: 18px; }
.selview table { width: 126px; margin-left: 6px; }
.selview tr { height: 14px; }
.selview thead tr { height: 12px; }
.selview th { color: #999; }
.selview td { color: var(--blue); font-weight: 600; }
.selview th:first-child, .selview td:first-child { width: 34px; }

.cursor { position: absolute; left: 1133px; top: 475px; width: 12px; height: 18px; }
```

FILE: app.js
```js
const icon = (id, cls = 'w12') => `<svg class="${cls}"><use href="#${id}"/></svg>`;

/* Files panel */
const files = [
  ['favorite_app.wav', '0:32.502'], ['intro.wav', '0:16.195'], ['intro_song.wav', '0:30.000'],
  ['outro.wav', '0:06.778'], ['outro_song.wav', '0:27.915'], ['Tech Talk Podcast.sesx *', '2:36.256', true],
  ['tech_news.wav', '0:29.735'], ['tech_term.wav', '0:37.694']
];
document.getElementById('files').innerHTML = files.map(([name, dur, session]) => `
  <tr class="${session ? 'on' : ''}"><td colspan="2"><span class="cell">
  ${session ? '<svg class="w8"></svg>' + icon('multi') : icon('right', 'w8') + icon('wave')}${name}</span></td>
  <td>${dur}</td><td>44100 Hz</td><td>Mono</td><td>16</td></tr>`).join('');

/* Rulers */
document.getElementById('ruler').innerHTML =
  ['hms', '0:10', '0:20', '0:30', '0:40', '0:50', '1:00', '1:10', '1:20', '1:30']
    .map(t => `<div><span>${t}</span></div>`).join('');
document.getElementById('scale').innerHTML =
  ['dB', ...Array.from({ length: 20 }, (_, i) => i * 3 - 57)].map(t => `<span>${t}</span>`).join('');

/* Waveforms: bursts are [start, end, core, spikes up, spikes down], peaks are [x, height] */
function wave(clip) {
  let seed = clip.seed;
  const rnd = () => (seed = (seed * 16807) % 2147483647) / 2147483647;
  const mid = 48;
  let d = '';
  for (const [a, b, core, up, down] of clip.bursts) {
    for (let x = a; x < b; x += 1) {
      const edge = Math.min(1, (x - a + 3) / 4, (b - x + 1) / 4);
      const c = core * (0.5 + 0.5 * rnd()) * edge;
      const u = rnd() < 0.35 ? c + (up - c) * rnd() * edge : c;
      const l = rnd() < 0.35 ? c + (down - c) * rnd() * edge : c;
      d += `M${x + 0.5} ${(mid - u).toFixed(1)}V${(mid + l).toFixed(1)}`;
    }
  }
  for (const [x, h] of clip.peaks || []) d += `M${x + 0.5} ${mid - h}V${mid + h * 0.6}`;
  return `<svg viewBox="0 0 ${clip.span} 88" preserveAspectRatio="none">
    <path d="M0 ${mid}H${clip.span}" stroke="${clip.wave}" stroke-width=".7"/>
    <path d="${d}" stroke="${clip.wave}" stroke-width="1.1"/>
    <path d="M0 37.500H${clip.span}" stroke="${clip.line}" stroke-width="1" ${clip.dash ? 'stroke-dasharray="5 2 3 4 8 3"' : ''}/></svg>`;
}

const tracks = [
  { name: 'Track 1', color: '#2ba58a' },
  { name: 'Music', color: '#39274c', clip: {
    title: 'intro_song (Music)', mode: 'Amplify: Gain', left: 0, width: 32.6, span: 183, seed: 77, bg: '#342447',
    wave: '#b07fec', line: '#c9b48d', dash: true,
    bursts: [[0, 20, 5, 15, 12], [19, 30, 17, 30, 26], [30, 42, 23, 33, 32], [42, 52, 14, 22, 18], [51, 70, 23, 34, 32], [70, 78, 14, 24, 25],
      [77, 96, 22, 36, 34], [95, 104, 16, 27, 24], [103, 122, 22, 28, 36], [121, 140, 21, 25, 35], [140, 150, 16, 24, 20],
      [148, 166, 20, 29, 27], [164, 174, 12, 20, 18], [173, 182, 5, 9, 7]],
    badges: `<span class="plain">${icon('ramp')}</span><span>fx</span><span>${icon('note')}</span>` } },
  { name: 'Tech News', color: '#4f3f14', clip: {
    title: 'tech_news (Dialogue)', mode: 'Volume', left: 30.8, width: 32.4, span: 182, seed: 912, bg: '#463a13',
    wave: '#e6b70e', line: '#b3a35f',
    bursts: [[17, 33, 8, 20, 17], [41, 67, 9, 16, 13], [77, 104, 9, 18, 18], [106, 123, 10, 18, 13], [131, 145, 9, 19, 18], [147, 162, 10, 16, 17]],
    peaks: [[20, 18], [25, 20], [77, 18]],
    badges: `<span>${icon('ramp')}</span><em>1.7 dB</em><span>fx</span><span>${icon('bubble')}</span>` } },
  { name: 'Tech Term', color: '#172b33', clip: {
    title: 'tech_term (Dialogue)', mode: 'Volume', left: 54.9, width: 41.1, span: 231, seed: 4411, bg: '#172a30',
    wave: '#1ca4b9', line: '#a9b08a',
    bursts: [[34, 41, 13, 14, 16], [43, 60, 11, 14, 14], [63, 75, 13, 15, 18], [79, 94, 12, 14, 18], [95, 103, 11, 12, 13], [107, 120, 12, 14, 19],
      [122, 133, 12, 15, 18], [137, 148, 13, 14, 16], [150, 160, 12, 14, 16], [164, 178, 11, 15, 15], [184, 194, 12, 16, 17], [196, 216, 11, 15, 17]],
    peaks: [[54, 19], [79, 20], [95, 23], [137, 29]],
    badges: `<span>${icon('ramp')}</span><em>- 2.6 dB</em><span>fx</span><span>${icon('bubble')}</span>` } },
  { name: 'Favorite App', color: '#43213f', clip: {
    title: 'favorite_app', mode: '', left: 93.2, width: 6.9, span: 38, seed: 333, bg: '#402143',
    wave: '#e566e8', line: '#c5a4a0',
    bursts: [[7, 19, 11, 22, 15], [23, 28, 13, 25, 22], [28, 38, 12, 16, 16]],
    peaks: [[13, 37], [14, 25], [24, 32], [32, 29]],
    badges: `<span>${icon('ramp')}</span><em>2.3 dB</em>` } }
];

const pick = (label, value, arrow) =>
  `<span class="pick"><select aria-label="${label}"><option>${value}</option></select>${icon(arrow, 'w8')}</span>`;

const clipHtml = c => `<article class="clip" style="left:${c.left}%;width:${c.width}%;background:${c.bg}">
  ${wave(c)}
  <div class="cliphead"><span>${c.title}</span>${c.mode ? `<button>${c.mode}${icon('down', 'w8')}</button>` : ''}</div>
  <div class="badges">${c.badges}</div></article>`;

document.getElementById('tracks').innerHTML = tracks.map(t => `
  <section class="track">
    <div class="stripe" style="background:${t.color}"></div>
    <div class="head">
      <div class="controls">
        <div class="top">${icon('wave')}<b>${t.name}</b><button>M</button><button>S</button><button class="off">R</button><button class="off">I</button></div>
        <div class="vol">${icon('ramp')}${icon('knob', 'w14')}<button>+0</button></div>
        <div class="io">${icon('arr')}${pick('Input', 'None', 'right')}<button aria-label="Polarity">${icon('phase', 'w10')}</button></div>
        <div class="io">${icon('arl')}${pick('Output', 'Master', 'right')}</div>
        <div class="io auto">${icon('right')}${pick('Automation', 'Read', 'down')}</div>
      </div>
      <div class="vu"></div>
    </div>
    <div class="lane">${t.clip ? clipHtml(t.clip) : ''}</div>
  </section>`).join('');
```
